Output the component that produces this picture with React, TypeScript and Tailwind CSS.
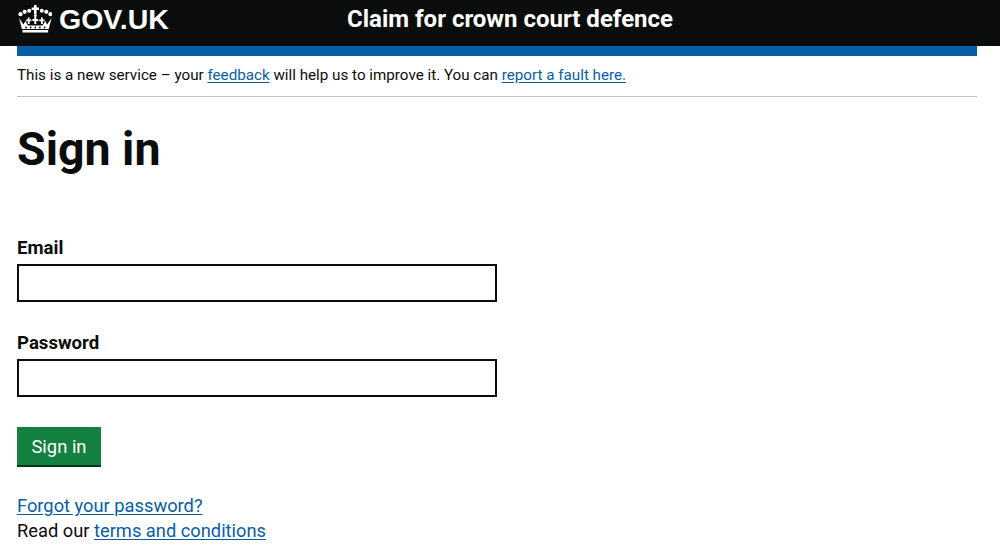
import type { JSX } from 'react';

function Crown(): JSX.Element {
  return (
    <svg className="ml-px" width="34" height="28" viewBox="0 0 34 28" fill="#ffffff" aria-hidden="true">
      {/* cross */}
      <path d="M16 0h2.600v2.500h2.400v2.500h-2.400v4h-2.600V5h-2.400V2.500H16z" />
      {/* pearls */}
      <circle cx="2.500" cy="9.200" r="2.100" />
      <circle cx="6.700" cy="6.800" r="2.100" />
      <circle cx="11.200" cy="5.800" r="2" />
      <circle cx="23.800" cy="5.800" r="2" />
      <circle cx="28.300" cy="6.800" r="2.100" />
      <circle cx="32.500" cy="9.200" r="2.100" />
      <circle cx="17.300" cy="10.500" r="1.500" />
      {/* fleurs */}
      <path d="M16.300 12h2v2h2v2h-2v3h-2v-3h-2v-2h2zM9.800 12.500h1.800v2h1.800v1.800h-1.800V19H9.800v-2.700H8v-1.800h1.800zM23 12.500h1.800v2h1.800v1.800h-1.800V19H23v-2.700h-1.800v-1.800H23z" />
      {/* band */}
      <path d="M1 13l4.500 6.500 1.800-3.500 2.700 4.500h14.600l2.700-4.500 1.800 3.500L33.600 13l-2.900 11H3.900z" />
      <path d="M4.500 25h25.600v2.500H4.500z" />
      <g fill="#0b0c0c">
        <circle cx="8" cy="22.500" r="0.900" />
        <circle cx="12.700" cy="22.500" r="0.900" />
        <circle cx="17.300" cy="22.500" r="0.900" />
        <circle cx="21.900" cy="22.500" r="0.900" />
        <circle cx="26.600" cy="22.500" r="0.900" />
      </g>
    </svg>
  );
}

function TextLink({ children }: { children: string }): JSX.Element {
  return (
    <a href="#" className="text-[#085ea5] underline underline-offset-2">
      {children}
    </a>
  );
}

export default function App(): JSX.Element {
  return (
    <div className="h-[546px] overflow-hidden bg-white font-['Roboto',sans-serif] text-[#0b0c0c]">
      <header className="flex h-[46px] items-center bg-[#0b0c0c] pb-[8px] pl-[17px] text-white">
        <div className="flex w-[330px] items-center gap-[7px]">
          <Crown />
          <span className="font-['Liberation_Sans',sans-serif] text-[28.500px] leading-none font-bold">GOV.UK</span>
        </div>
        <span className="text-[24px] leading-none font-bold">Claim for crown court defence</span>
      </header>

      <div className="px-[17px] pr-[23px]">
        <div className="h-[10px] bg-[#085ea5]" />
        <p className="border-b border-[#bfc1c3] pt-[9px] pb-[11px] text-[15.200px] leading-5">
          This is a new service – your <TextLink>feedback</TextLink> will help us to improve it. You can{' '}
          <TextLink>report a fault here.</TextLink>
        </p>

        <h1 className="mt-[22px] text-[46.500px] leading-[60px] font-bold">Sign in</h1>

        <form className="mt-[57px] w-[480px]">
          <label className="block text-[18.600px] leading-[25px] font-bold">Email</label>
          <input className="mt-[3px] block h-[38px] w-full border-2 border-[#0b0c0c]" type="text" />

          <label className="mt-[29px] block text-[18.600px] leading-[25px] font-bold">Password</label>
          <input className="mt-[3px] block h-[38px] w-full border-2 border-[#0b0c0c]" type="password" />

          <button
            type="button"
            className="mt-[30px] block h-10 w-[84px] border-b-2 border-[#003618] bg-[#13803f] pt-px text-[18.400px] text-white"
          >
            Sign in
          </button>
        </form>

        <div className="mt-[26px] text-[18.300px] leading-[25px]">
          <p>
            <TextLink>Forgot your password?</TextLink>
          </p>
          <p>
            Read our <TextLink>terms and conditions</TextLink>
          </p>
        </div>
      </div>
    </div>
  );
}
